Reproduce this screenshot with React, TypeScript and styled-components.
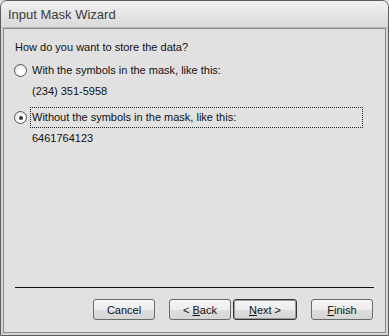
import styled, { createGlobalStyle } from "styled-components";

const Global = createGlobalStyle`
  html, body {
    margin: 0;
    padding: 0;
    background: #e0e0e0;
  }
`;

export default function App() {
  return (
    <>
      <Global />
      <Window>
        <TitleBar>Input Mask Wizard</TitleBar>
        <Frame>
          <Content>
            <Question>How do you want to store the data?</Question>
            <Option>
              <Radio />
              <OptionLabel>With the symbols in the mask, like this:</OptionLabel>
            </Option>
            <Sample>(234) 351-5958</Sample>
            <Option>
              <Radio $checked />
              <OptionLabel $focused>Without the symbols in the mask, like this:</OptionLabel>
            </Option>
            <Sample>6461764123</Sample>
            <Spacer />
            <Separator />
            <ButtonRow>
              <Button>Cancel</Button>
              <NavGroup>
                <Button>
                  &lt; <u>B</u>ack
                </Button>
                <Button $default>
                  <u>N</u>ext &gt;
                </Button>
              </NavGroup>
              <Button>
                <u>F</u>inish
              </Button>
            </ButtonRow>
          </Content>
        </Frame>
      </Window>
    </>
  );
}

const Window = styled.div`
  box-sizing: border-box;
  width: 389px;
  height: 336px;
  display: flex;
  flex-direction: column;
  border: 1px solid #5c5c5c;
  border-radius: 7px 7px 0 0;
  background: #d6d6d6;
  overflow: hidden;
  font-family: "Liberation Sans", Arial, sans-serif;
`;

const TitleBar = styled.div`
  height: 26px;
  flex: none;
  padding-left: 7px;
  display: flex;
  align-items: center;
  font-size: 13px;
  color: #3c3c3c;
  background: linear-gradient(#f2f2f2, #e4e4e4 50%, #dadada);
  border-bottom: 1px solid #bcbcbc;
`;

const Frame = styled.div`
  flex: 1;
  display: flex;
  padding: 0 2px 2px 2px;
  background: #d4d4d4;
`;

const Content = styled.div`
  flex: 1;
  display: flex;
  flex-direction: column;
  border: 1px solid #8a8a8a;
  background: #e1e1e1;
  padding: 11px 10px 12px 9px;
  font-size: 11px;
  color: #111;
`;

const Question = styled.div`
  height: 14px;
  line-height: 14px;
  margin: 0 0 6px 2px;
`;

const Option = styled.div`
  display: flex;
  align-items: center;
  gap: 3px;
  margin-left: 1px;
`;

const Radio = styled.span<{ $checked?: boolean }>`
  position: relative;
  box-sizing: border-box;
  width: 13px;
  height: 13px;
  flex: none;
  border-radius: 50%;
  border: 1px solid #555;
  background: radial-gradient(circle at 60% 65%, #ffffff 30%, #e6e6e6 70%, #cfcfcf);
  &::after {
    content: "";
    display: ${(p) => (p.$checked ? "block" : "none")};
    position: absolute;
    left: 3.5px;
    top: 3.5px;
    width: 4px;
    height: 4px;
    border-radius: 50%;
    background: #333;
  }
`;

const OptionLabel = styled.span<{ $focused?: boolean }>`
  flex: ${(p) => (p.$focused ? 1 : "none")};
  height: 21px;
  line-height: 19px;
  padding-left: 1px;
  box-sizing: border-box;
  border: 1px dotted ${(p) => (p.$focused ? "#222" : "transparent")};
  margin-right: 12px;
`;

const Sample = styled.div`
  height: 14px;
  line-height: 14px;
  margin: 3px 0 9px 19px;
`;

const Spacer = styled.div`
  flex: 1;
`;

const Separator = styled.div`
  height: 1px;
  background: #111;
  margin: 0 1px 11px 2px;
`;

const ButtonRow = styled.div`
  display: flex;
  justify-content: flex-end;
  gap: 14px;
  padding-right: 2px;
`;

const NavGroup = styled.div`
  display: flex;
  gap: 2px;
`;

const Button = styled.button<{ $default?: boolean }>`
  box-sizing: border-box;
  width: ${(p) => (p.$default ? 64 : 62)}px;
  height: 21px;
  padding: 0;
  font-family: "Liberation Sans", Arial, sans-serif;
  font-size: 11px;
  color: #111;
  border: 1px solid ${(p) => (p.$default ? "#333" : "#6a6a6a")};
  box-shadow: ${(p) => (p.$default ? "inset 0 0 0 1px #9a9a9a" : "none")};
  border-radius: 3px;
  background: linear-gradient(#f6f6f6, #ececec 50%, #dedede 51%, #d6d6d6);
  u {
    text-decoration: underline;
  }
`;
